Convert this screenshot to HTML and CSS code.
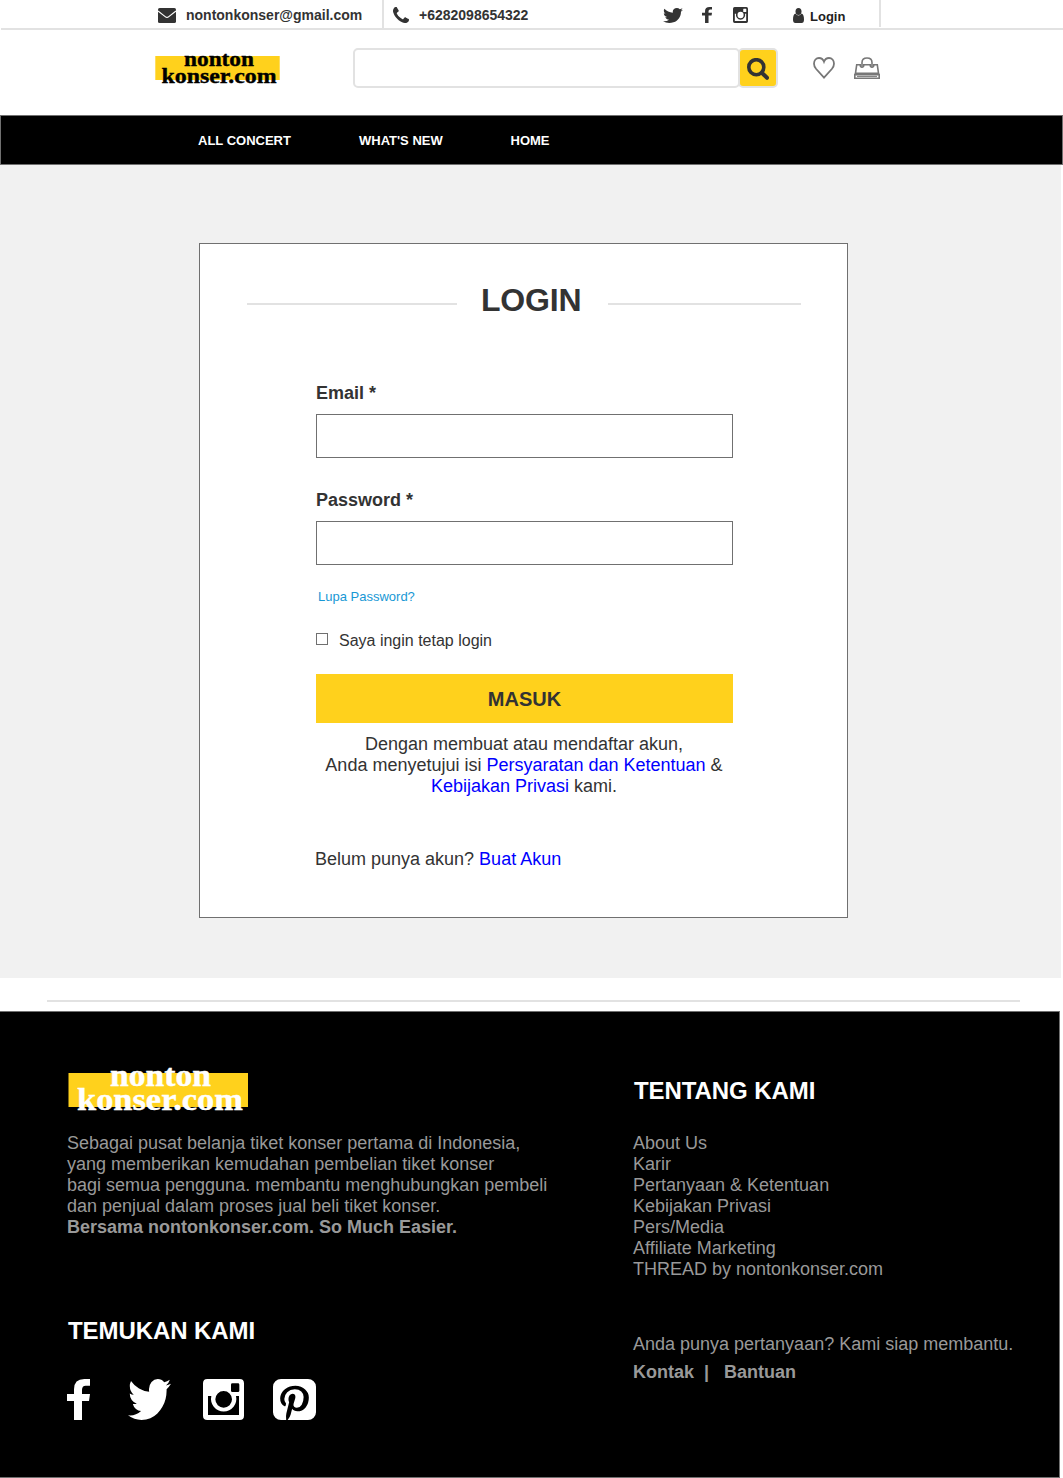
FILE: index.html
```html
<!DOCTYPE html>
<html lang="id">
<head>
<meta charset="utf-8">
<title>Login - nontonkonser.com</title>
<link rel="stylesheet" href="styles.css">
</head>
<body>
<svg class="sprite" aria-hidden="true">
  <symbol id="twitter" viewBox="108 256 1576 1280" preserveAspectRatio="none"><path d="M1684 408q-67 98-162 167 1 14 1 42 0 130-38 259.5t-115.5 248.5-184.5 210.5-258 146-323 54.5q-271 0-496-145 35 4 78 4 225 0 401-138-105-2-188-64.5t-114-159.5q33 5 61 5 43 0 85-11-112-23-185.5-111.5t-73.5-205.5v-4q68 38 146 41-66-44-105-115t-39-154q0-88 44-163 121 149 294.5 238.5t371.5 99.5q-8-38-8-74 0-134 94.5-228.5t228.5-94.5q140 0 236 102 109-21 205-78-37 115-142 178 93-10 186-50z"/></symbol>
  <symbol id="facebook" viewBox="0 0 69 123" preserveAspectRatio="none"><path d="M69 0V20H56Q45 20 45 33V45H69L66 66H45V123H21V66H0V45H21V31Q21 0 52 0Z"/></symbol>
  <symbol id="instagram" viewBox="0 0 123 123" preserveAspectRatio="none"><path fill-rule="evenodd" d="M13 0H110Q123 0 123 13V110Q123 123 110 123H13Q0 123 0 110V13Q0 0 13 0ZM88 13Q84 13 84 17V35Q84 39 88 39H105Q109 39 109 35V17Q109 13 105 13ZM15 51V108H108V51H99A38 38 0 1 1 25 51ZM62 36A25 25 0 1 0 62 86A25 25 0 1 0 62 36Z"/></symbol>
</svg>

<header>
  <div class="topbar">
    <div class="contact contact-mail">
      <svg class="icon-mail" viewBox="0 0 18 15"><rect width="18" height="15" rx="1.6"/><path d="M0 3L7.2 8.6Q9 10 10.8 8.6L18 3" fill="none" stroke="#fff" stroke-width="1.2"/></svg>
      <span>nontonkonser@gmail.com</span>
    </div>
    <div class="contact contact-phone">
      <svg class="icon-phone" viewBox="192 128 1408 1408"><path d="M1600 1240q0 27-10 70.5t-21 68.5q-21 50-122 106-94 51-186 51-27 0-53-3.5t-57.5-12.5-47-14.5-55.5-20.5-49-18q-98-35-175-83-127-79-264-216t-216-264q-48-77-83-175-3-9-18-49t-20.5-55.5-14.5-47-12.5-57.5-3.5-53q0-92 51-186 56-101 106-122 25-11 68.5-21t70.5-10q14 0 21 3 18 6 53 76 11 19 30 54t35 63.5 31 53.5q3 4 17.5 25t21.5 35.5 7 28.5q0 20-28.5 50t-62 55-62 53-28.5 46q0 9 5 22.5t8.5 20.5 14 24 11.5 19q76 137 174 235t235 174q2 1 19 11.5t24 14 20.5 8.5 22.5 5q18 0 46-28.5t53-62 55-62 50-28.5q14 0 28.5 7t35.5 21.5 25 17.5q25 15 53.5 31t63.5 35 54 30q70 35 76 53 3 7 3 21z"/></svg>
      <span>+6282098654322</span>
    </div>
    <div class="top-social">
      <svg class="tw"><use href="#twitter"/></svg>
      <svg class="fb"><use href="#facebook"/></svg>
      <svg class="ig"><use href="#instagram"/></svg>
    </div>
    <a class="top-login"><svg viewBox="0 0 11 15"><ellipse cx="5.5" cy="3.5" rx="3" ry="3.5"/><path d="M2.3 5.6Q5.5 9.3 8.7 5.6Q11 6.7 11 11.5Q11 15 8.6 15H2.4Q0 15 0 11.5Q0 6.7 2.3 5.6Z"/></svg><span>Login</span></a>
  </div>
  <div class="brandbar">
    <svg class="logo" viewBox="0 0 126 36"><rect x=".3" y="6" width="124.4" height="24" fill="#ffd11c"/><text x="29" y="15.5" font-size="22" textLength="70" lengthAdjust="spacingAndGlyphs">nonton</text><text x="6.5" y="33" font-size="22" textLength="115" lengthAdjust="spacingAndGlyphs">konser.com</text></svg>
    <div class="search">
      <input type="text" aria-label="Cari">
      <button aria-label="Cari"><svg viewBox="0 0 22 22"><circle cx="9.3" cy="9.2" r="7.5" fill="none" stroke="#333" stroke-width="3.6"/><path d="M14.8 14.8L20 19.8" stroke="#333" stroke-width="4" stroke-linecap="round"/></svg></button>
    </div>
    <svg class="heart" viewBox="0 0 22 22"><path d="M11 20.6L3.2 12Q1 9.4 1 6.7C1 3.3 3.2 1 6 1C8.3 1 10.1 2.4 11 4.8C11.9 2.4 13.7 1 16 1C18.8 1 21 3.3 21 6.7Q21 9.4 18.8 12Z"/></svg>
    <svg class="bag" viewBox="0 0 26 22"><path d="M1.5 16.2L2.7 7.8H6.3V9Q8 11.6 9.7 9V7.8H16.3V9Q18 11.6 19.7 9V7.8H23.3L24.5 16.2Z"/><path d="M8 9.5V5.5Q8 1 13 1T18 5.5V9.5"/><path d="M.8 17.6H25.2V21.2H.8Z"/><path d="M3 19.4H23" stroke-width="1"/></svg>
  </div>
  <nav><a>ALL CONCERT</a><a>WHAT'S NEW</a><a>HOME</a></nav>
</header>

<main>
  <form class="card">
    <div class="title"><i></i><h1>LOGIN</h1><i></i></div>
    <div class="fields">
      <label for="email">Email *</label>
      <input id="email" type="text">
      <label for="password">Password *</label>
      <input id="password" type="password">
      <a class="forgot">Lupa Password?</a>
      <label class="remember"><input type="checkbox"><span>Saya ingin tetap login</span></label>
      <button type="button">MASUK</button>
      <p class="terms">Dengan membuat atau mendaftar akun,<br>Anda menyetujui isi <a>Persyaratan dan Ketentuan</a> &amp;<br><a>Kebijakan Privasi</a> kami.</p>
      <p class="register">Belum punya akun? <a>Buat Akun</a></p>
    </div>
  </form>
</main>
<hr>
<footer>
  <section class="about">
    <svg class="logo logo-light" viewBox="0 0 181 50"><rect x=".5" y="8" width="179.5" height="34" fill="#ffd11c"/><text x="42" y="21" font-size="30.5" textLength="101" lengthAdjust="spacingAndGlyphs">nonton</text><text x="9" y="45" font-size="31" textLength="166" lengthAdjust="spacingAndGlyphs">konser.com</text></svg>
    <p>Sebagai pusat belanja tiket konser pertama di Indonesia,<br>yang memberikan kemudahan pembelian tiket konser<br>bagi semua pengguna. membantu menghubungkan pembeli<br>dan penjual dalam proses jual beli tiket konser.<br><b>Bersama nontonkonser.com. So Much Easier.</b></p>
    <h2>TEMUKAN KAMI</h2>
    <div class="social">
      <svg class="fb"><use href="#facebook"/></svg>
      <svg class="tw"><use href="#twitter"/></svg>
      <svg class="ig"><use href="#instagram"/></svg>
      <svg class="pin" viewBox="128 128 1536 1536" preserveAspectRatio="none"><path d="M1376 128q119 0 203.5 84.5t84.5 203.5v960q0 119-84.5 203.5t-203.5 84.5h-725q85-122 108-210 9-34 53-209 21 39 73.5 67t112.5 28q181 0 295.5-147.5t114.5-373.5q0-84-35-162.5t-96.5-139-152.5-97-197-36.5q-104 0-194.5 28.5t-153 76.5-107.5 109.5-66.5 128-21.5 132.5q0 102 39.5 180t116.5 110q13 5 23.5 0t14.5-19q10-44 15-61 6-23-11-42-50-62-50-150 0-150 103.5-256.5t270.5-106.5q149 0 232.5 81t83.5 210q0 168-67.5 286t-173.5 118q-60 0-97-43.5t-23-103.5q8-34 26.5-92.5t29.5-102 11-74.5q0-49-26.5-81.5t-75.5-32.5q-61 0-103.5 56.5t-42.5 139.5q0 72 24 121l-98 414q-24 100-7 254h-183q-119 0-203.5-84.5t-84.5-203.5v-960q0-119 84.5-203.5t203.5-84.5h960z"/></svg>
    </div>
  </section>
  <section class="links">
    <h2>TENTANG KAMI</h2>
    <ul><li>About Us</li><li>Karir</li><li>Pertanyaan &amp; Ketentuan</li><li>Kebijakan Privasi</li><li>Pers/Media</li><li>Affiliate Marketing</li><li>THREAD by nontonkonser.com</li></ul>
    <p class="ask">Anda punya pertanyaan? Kami siap membantu.</p>
    <p class="help"><b>Kontak</b><b>|</b><b>Bantuan</b></p>
  </section>
</footer>
</body>
</html>
```

FILE: styles.css
```css
* { box-sizing: border-box; }
body { margin: 0; background: #fff; color: #333; font: 18px/21px "Liberation Sans", Arial, sans-serif; }
svg { display: block; flex: none; fill: currentColor; }
.sprite { display: none; }
h1, h2, p, ul { margin: 0; padding: 0; }
ul { list-style: none; }

.topbar { display: flex; height: 30px; margin-left: 1px; border-bottom: 2px solid #e2e2e2; font-weight: bold; font-size: 14px; line-height: 16px; white-space: nowrap; }
.contact { display: flex; align-items: flex-start; border-right: 2px solid #e2e2e2; }
.contact span { padding-top: 7px; }
.contact-mail { width: 383px; padding-left: 157px; gap: 10px; }
.icon-mail { width: 18px; height: 15px; margin-top: 8px; }
.contact-phone { width: 270px; padding-left: 9px; gap: 10px; border: 0; }
.icon-phone { width: 16px; height: 16px; margin-top: 7px; }
.top-social { display: flex; width: 130px; padding: 7px 0 0 9px; }
.top-social .tw { width: 20px; height: 15px; margin-top: 1px; }
.top-social .fb { width: 10px; height: 16px; margin-left: 19px; }
.top-social .ig { width: 15px; height: 16px; margin-left: 21px; }
.top-login { display: flex; height: 27px; width: 97px; padding: 8px 0 0 9px; border-right: 2px solid #e2e2e2; color: #222; font-size: 13px; }
.top-login svg { width: 11px; height: 15px; margin-right: 6px; color: #333; }
.top-login span { padding-top: 1px; }

.brandbar { display: flex; height: 85px; padding: 18px 0 0 155px; }
.logo { width: 126px; height: 36px; margin-top: 2px; overflow: visible; font-family: "Liberation Serif", "Times New Roman", serif; font-weight: bold; color: #000; stroke: none; }
.logo text { stroke: currentColor; stroke-width: .4; }
.search { display: flex; margin-left: 72px; height: 40px; }
.search input { width: 387px; height: 40px; border: 2px solid #e2e2e2; border-radius: 5px; background: #fff; }
.search button { width: 40px; height: 40px; margin-left: -2px; padding: 8px 7px; border: 2px solid #e2e2e2; border-radius: 5px; background: #ffd11c; }
.search button svg { width: 22px; height: 22px; }
.heart, .bag { fill: none; stroke: #777; stroke-width: 1.8; }
.heart { width: 22px; height: 22px; margin: 9px 0 0 35px; }
.bag { width: 26px; height: 22px; margin: 9px 0 0 19px; stroke-width: 1.6; }
nav { display: flex; height: 50px; padding: 17px 0 0 197px; border: 1px solid #707070; background: #000; color: #fff; font-weight: bold; font-size: 13px; line-height: 16px; }
nav a:nth-child(1) { width: 161px; }
nav a:nth-child(2) { width: 151.5px; }

main { width: 1061px; height: 813px; padding: 78px 0 0 199px; background: #f1f1f1; }
.card { width: 649px; height: 675px; border: 1px solid #707070; background: #fff; }
.title { display: flex; padding: 38px 46px 0 47px; }
.title i { width: 210px; height: 2px; margin-top: 21px; background: #e2e2e2; }
.title i:last-child { width: 193px; }
h1 { width: 151px; padding-left: 24px; font-size: 32px; line-height: 37px; letter-spacing: -.2px; }
.fields { display: flex; flex-direction: column; width: 417px; margin: 64px 0 0 116px; }
.fields > label { height: 31px; font-weight: bold; }
.fields > input { height: 44px; border: 1px solid #707070; background: #fff; margin: 0 0 32px; }
.fields #password { margin-bottom: 24px; }
.forgot { height: 15px; padding-left: 2px; color: #1898d5; font-size: 13px; line-height: 15px; }
.fields .remember { display: flex; height: 19px; margin: 26px 0 25px; font-weight: normal; font-size: 16px; line-height: 22px; }
.remember input { appearance: none; width: 12px; height: 12px; margin: 3px 11px 0 0; border: 1px solid #707070; }
.fields button { height: 49px; padding: 0; border: 0; background: #ffd11c; color: #333; font: bold 20px/24px "Liberation Sans", Arial, sans-serif; }
.terms { margin-top: 11px; padding-right: 1px; text-align: center; }
.terms a, .register a { color: #00f; }
.register { margin: 52px 0 0 -1px; }
hr { width: 973px; height: 2px; margin: 22px 0 9px 47px; border: 0; background: #e2e2e2; }

footer { display: flex; width: 1060px; height: 467px; padding-left: 67px; border: solid #707070; border-width: 1px 1px 1px 0; background: #000; color: #999; }
.about { width: 566px; padding-top: 53px; }
.logo-light { width: 181px; height: 50px; margin: 0 0 0 1px; color: #fff; }
.about p { margin-top: 18px; }
h2 { color: #fff; font-size: 24px; line-height: 28px; letter-spacing: -.08px; }
.about h2 { margin: 79px 0 0 1px; }
.social { display: flex; margin-top: 34px; color: #fff; }
.social .fb { width: 23px; height: 41px; }
.social .tw { width: 43px; height: 41px; margin-left: 38px; }
.social .ig { width: 41px; height: 41px; margin-left: 32px; }
.social .pin { width: 43px; height: 41px; margin-left: 29px; }
.links { padding-top: 65px; }
.links h2 { padding-left: 1px; }
.links ul { margin-top: 28px; }
.ask { margin-top: 54px; white-space: nowrap; }
.help { display: flex; margin-top: 7px; }
.help b:nth-child(2) { margin: 0 15px 0 10px; }
```
